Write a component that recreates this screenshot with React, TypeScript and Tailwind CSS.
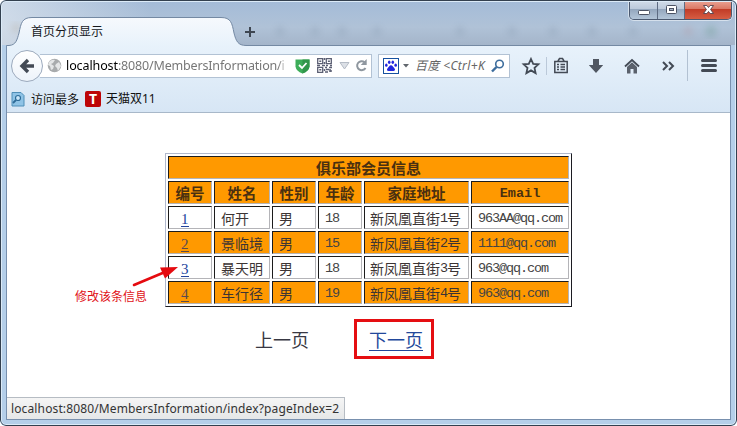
import type { ReactNode } from "react";

const members = [
  { id: "1", name: "何开", sex: "男", age: "18", no: "1", email: "963AA@qq.com" },
  { id: "2", name: "景临境", sex: "男", age: "15", no: "2", email: "1111@qq.com" },
  { id: "3", name: "暴天明", sex: "男", age: "18", no: "3", email: "963@qq.com" },
  { id: "4", name: "车行径", sex: "男", age: "19", no: "4", email: "963@qq.com" },
];

const UI = "font-['Noto_Sans','Noto_Sans_CJK_SC',sans-serif]";
const CJK = "font-['Noto_Sans_CJK_SC',sans-serif]";
const MONO = "font-['Liberation_Mono','Noto_Sans_CJK_SC',monospace] text-[13.5px] tracking-[-1.1px]";

function Cell({ orange, className = "", children }: { orange: boolean; className?: string; children: ReactNode }) {
  return (
    <div
      className={`flex h-[23px] items-center overflow-hidden whitespace-nowrap border border-b-[#b4b4b8] border-l-[#1c1c1c] border-r-[#b4b4b8] border-t-[#1c1c1c] ${orange ? "bg-[#ff9900]" : "bg-white"} ${className}`}
    >
      {children}
    </div>
  );
}

function MemberTable() {
  return (
    <div className="grid w-[407px] grid-cols-[44px_56px_44px_44px_105px_98px] gap-[2px] border border-b-[#1c1c22] border-l-[#b0b8cc] border-r-[#1c1c22] border-t-[#b0b8cc] p-[2px] text-[14px] leading-[20px] text-[#3c3434]">
      <Cell orange className="col-span-6 justify-center text-[15px] font-bold text-[#4a3010]">
        <span>俱乐部会员信息</span>
      </Cell>
      {["编号", "姓名", "性别", "年龄", "家庭地址"].map((t) => (
        <Cell key={t} orange className="justify-center text-[14.5px] font-bold text-[#4a3010]">
          <span>{t}</span>
        </Cell>
      ))}
      <Cell orange className="justify-center pt-[3px] font-['Liberation_Mono',monospace] text-[13.5px] font-bold text-[#4a3010]">
        Email
      </Cell>
      {members.map((m, i) => {
        const o = i % 2 === 1;
        return [
          <Cell key={m.id + "a"} orange={o} className="pl-[12px]">
            <span
              className={`mt-[3px] h-[16px] border-b font-['Liberation_Serif',serif] text-[15px] leading-[17px] ${o ? "border-[#5a4a50] text-[#5a4a50]" : "border-[#23449c] text-[#23449c]"}`}
            >
              {m.id}
            </span>
          </Cell>,
          <Cell key={m.id + "b"} orange={o} className="pl-[6px]">{m.name}</Cell>,
          <Cell key={m.id + "c"} orange={o} className="pl-[6px]">{m.sex}</Cell>,
          <Cell key={m.id + "d"} orange={o} className="pl-[6px]">
            <span className={`${MONO} mt-[3px] text-[#444]`}>{m.age}</span>
          </Cell>,
          <Cell key={m.id + "e"} orange={o} className="pl-[5px]">
            <span>新凤凰直街</span>
            <span className={`${MONO} mt-[3px]`}>{m.no}</span>
            <span>号</span>
          </Cell>,
          <Cell key={m.id + "f"} orange={o} className="pl-[6px]">
            <span className={`${MONO} mt-[3px] text-[#444]`}>{m.email}</span>
          </Cell>,
        ];
      })}
    </div>
  );
}

function WindowButtons() {
  return (
    <div className="absolute right-[5px] top-0 flex h-[20px] w-[103px] overflow-hidden rounded-b-[5px] border border-t-0 border-[#4b5970] shadow-[0_0_0_1px_#d5e0ec]">
      <div className="flex w-[28px] items-center justify-center border-r border-[#5d6b82] bg-[linear-gradient(#d4deea_0,#bccadb_45%,#94a7be_50%,#b3c5d8_100%)]">
        <svg width="14" height="14" viewBox="0 0 14 14"><rect x="1.5" y="7.5" width="11" height="4" rx="1" fill="#fff" stroke="#4b5263" /></svg>
      </div>
      <div className="flex w-[27px] items-center justify-center border-r border-[#5d6b82] bg-[linear-gradient(#d4deea_0,#bccadb_45%,#94a7be_50%,#b3c5d8_100%)]">
        <svg width="13" height="12" viewBox="0 0 13 12"><rect x="1.5" y="1.5" width="10" height="8" rx="1" fill="#fff" stroke="#4b5263" /><rect x="4.5" y="4.5" width="4" height="2" fill="#a8b5c6" stroke="#4b5263" /></svg>
      </div>
      <div className="flex flex-1 items-center justify-center bg-[linear-gradient(#eca89a_0,#db7966_45%,#c13c27_50%,#d65d43_100%)]">
        <svg width="13" height="13" viewBox="0 0 13 13"><path d="M1.500 2.500h3.400l1.600 2 1.600-2h3.400L8.600 6.500l2.900 4H8.100l-1.600-2-1.600 2H1.500l2.900-4z" fill="#fff" stroke="#54414c" strokeWidth="0.9" /></svg>
      </div>
    </div>
  );
}

function TabStrip() {
  return (
    <div className="relative h-[45px] bg-[linear-gradient(#a3bbd8,#b0c2d7_60%,#a4b5ca)]">
      <svg className="absolute left-0 top-0" width="737" height="46" viewBox="0 0 737 46">
        <defs>
          <linearGradient id="tab" x1="0" y1="17" x2="0" y2="46" gradientUnits="userSpaceOnUse">
            <stop offset="0" stopColor="#f6f9fd" /><stop offset="1" stopColor="#e8f2fb" />
          </linearGradient>
          <linearGradient id="glow"><stop stopColor="#dfe7f0" stopOpacity=".7" /><stop offset="1" stopColor="#dfe7f0" stopOpacity="0" /></linearGradient>
          <filter id="soft"><feGaussianBlur stdDeviation="3" /></filter>
        </defs>
        <rect width="150" height="45" fill="url(#glow)" />
        <g filter="url(#soft)" opacity=".14">
          <circle cx="16" cy="28" r="5" fill="#9c7b50" />
          {[280, 315, 342, 377, 460, 512, 553, 592, 633].map((x) => <circle key={x} cx={x} cy="31" r="5" fill="#60758a" />)}
          <circle cx="688" cy="31" r="5" fill="#b66" /><circle cx="711" cy="31" r="6" fill="#176f42" />
        </g>
        <path d="M6.500 46V45.500H9C16 45 17 40 19 33C21 23 22 17.500 32 17.500H221C231 17.500 232 23 234 33C236 41 238 45.500 246 45.500H731V46z" fill="url(#tab)" />
        <path d="M6.500 45.500H9C16 45 17 40 19 33C21 23 22 17.500 32 17.500H221C231 17.500 232 23 234 33C236 41 238 45.500 246 45.500H731" fill="none" stroke="#7489a3" />
        <path d="M245 32h10M250 27v10" stroke="#3e4651" strokeWidth="2" />
      </svg>
      <div className={`${CJK} relative pl-[31px] pt-[22px] text-[12px] leading-[18px] text-[#15181d]`}>首页分页显示</div>
      <WindowButtons />
    </div>
  );
}

function Toolbar() {
  return (
    <div className="flex h-[41px] items-center">
      <div className="z-10 ml-[4px] flex h-[32px] w-[32px] shrink-0 items-center justify-center rounded-full border border-[#9caabd] bg-[linear-gradient(#fff,#edf3fa)]">
        <svg width="16" height="16" viewBox="0 0 16 16" fill="none" stroke="#434a55" strokeWidth="3.400"><path d="M15 8H3M9 2L3 8l6 6" /></svg>
      </div>
      <div className={`-ml-[3px] flex h-[24px] w-[332px] shrink-0 items-center border border-l-0 border-[#b2c2d4] bg-white pl-[7px] ${UI}`}>
        <svg width="15" height="15" viewBox="0 0 15 15"><circle cx="7.500" cy="7.500" r="6.800" fill="#a8abad" /><path d="M2 4q3-3 6-2L6 5 4 6l3 2-1 3-2 1-1-4-2-1zM9 6l3-2 2 4-3 5-1-3-2-2z" fill="#e4e6e7" /></svg>
        <div className="ml-[4px] w-[220px] whitespace-nowrap text-[12.5px] leading-[20px] text-[#777] [mask-image:linear-gradient(to_right,#000_212px,transparent_222px)]">
          <span className="tracking-[-0.1px] text-black">localhost</span><span className="tracking-[-0.17px]">:8080/MembersInformation/i</span>
        </div>
        <svg className="ml-[9px]" width="15" height="16" viewBox="0 0 15 16"><path d="M.5 1.500h14v7Q14 13 7.500 15.500Q1 13 .5 8.500z" fill="#3dad59" /><path d="M7.500 1.500h7v7Q14 13 7.500 15.500z" fill="#32964b" /><path d="M4 7l3 3 4.500-5" fill="none" stroke="#fff" strokeWidth="1.800" /></svg>
        <svg className="ml-[7px]" width="15" height="15" viewBox="0 0 15 15" stroke="#5b5f73" fill="none"><path d="M.7.7h5v5h-5zM9.300.7h5v5h-5zM.7 9.300h5v5h-5z" strokeWidth="1.300" /><path d="M2.300 3.200h2M10.900 3.200h2M2.300 11.800h2M7.500 0v2M7.500 4v2M0 7.500h3M5 7.500h3M9 7.500h2M13 7.500h2M8 9.500h2M12 9.500h3M9 11.500h3M7.500 11v2M8 14h3M13 13h2M13 11v3" strokeWidth="1.600" /></svg>
        <svg className="ml-[7px]" width="11" height="10" viewBox="0 0 11 10"><path d="M1 1.500h9L5.500 8z" fill="#dce0e6" stroke="#b5bcc6" /></svg>
        <svg className="ml-[5px]" width="13" height="13" viewBox="0 0 13 13"><path d="M9.500 3.200A4.500 4.500 0 1 0 10.500 9" fill="none" stroke="#8f979f" strokeWidth="2" /><path d="M11.700 0v6H5.800z" fill="#8f979f" /></svg>
      </div>
      <div className={`ml-[6px] flex h-[24px] w-[132px] shrink-0 items-center border border-[#b2c2d4] bg-white pl-[4px] ${UI}`}>
        <svg width="16" height="16" viewBox="0 0 16 16"><rect x=".5" y=".5" width="15" height="15" fill="#fff" stroke="#1751a0" /><g fill="#2026df" transform="translate(1.200 1.200) scale(.85)"><ellipse cx="2.500" cy="7" rx="1.500" ry="1.900" /><ellipse cx="5.900" cy="3.600" rx="1.500" ry="2" /><ellipse cx="10.100" cy="3.600" rx="1.500" ry="2" /><ellipse cx="13.500" cy="7" rx="1.500" ry="1.900" /><path d="M8 7.200c2 0 2 1.800 4 3.400 1.500 1.300.5 3.700-1.500 3.400H5.500C3.500 14.300 2.500 12 4 10.600 6 9 6 7.200 8 7.200z" /></g></svg>
        <svg className="ml-[4px]" width="6" height="4" viewBox="0 0 6 4"><path d="M0 0h6L3 3.500z" fill="#61666d" /></svg>
        <span className="ml-[6px] w-[71px] whitespace-nowrap text-[12px] italic leading-[20px] tracking-[0.35px] text-[#666]">百度 &lt;Ctrl+K</span>
        <svg className="ml-[5px]" width="14" height="14" viewBox="0 0 14 14" fill="none" stroke="#3d6d9d"><circle cx="8.500" cy="5" r="3.800" strokeWidth="1.600" /><path d="M5.500 8L1 12.500" strokeWidth="2.400" /></svg>
      </div>
      <svg className="shrink-0" width="221" height="34" viewBox="510 49 221 34" fill="none" stroke="#434a55">
        <path d="M531 59l2.200 4.800 5.200.5-3.900 3.600 1.100 5.200-4.600-2.700-4.600 2.700 1.100-5.200-3.900-3.600 5.200-.5z" strokeWidth="1.800" />
        <path d="M546.500 57v18" stroke="#bbc9d9" />
        <path d="M554.800 61.500h12.400v11h-12.400zM558 61l1.500-2.500h3L564 61M557 64.500h2M560.500 64.500h4.500M557 67h2M560.500 67h4.500M557 69.500h2M560.500 69.500h4.500" strokeWidth="1.500" />
        <path d="M593 59h6v6h4.200L596 73l-7.200-8h4.200z" fill="#505762" stroke="none" />
        <path d="M625 66.500l7-6.500 7 6.500" strokeWidth="1.800" /><path d="M627 67l5-4.700 5 4.700v6.500h-3.500v-4.500h-3v4.500H627z" fill="#5a616c" stroke="none" />
        <path d="M663 62l4 4-4 4M669 62l4 4-4 4" strokeWidth="2" />
        <path d="M687.500 50v31" stroke="#b2c1d2" />
        <path d="M702.500 60.500h13M702.500 65.500h13M702.500 70.500h13" strokeWidth="3" strokeLinecap="round" />
      </svg>
    </div>
  );
}

function Bookmarks() {
  return (
    <div className={`flex h-[26px] items-center pl-[4px] text-[12px] leading-[18px] text-[#111] ${CJK}`}>
      <svg width="14" height="15" viewBox="0 0 14 15"><path d="M1 .5h9l3 3v10.500H1z" fill="#8fc3e6" stroke="#4f8eb7" /><circle cx="7" cy="6" r="2.500" fill="#c9e7fb" stroke="#2e6c98" strokeWidth="1.200" /><path d="M5 8l-3 3" stroke="#2e6c98" strokeWidth="1.800" /></svg>
      <span className="ml-[6px] w-[48px] whitespace-nowrap">访问最多</span>
      <span className="ml-[6px] flex h-[16px] w-[16px] items-center justify-center rounded-[2px] bg-[#bd0508] font-['Noto_Sans',sans-serif] text-[14px] font-bold leading-[16px] text-white">T</span>
      <span className={`ml-[5px] ${UI}`}>天猫双11</span>
    </div>
  );
}

export default function App() {
  return (
    <div className="relative h-[426px] w-[737px] overflow-hidden rounded-[6px] bg-[#b5cfe9]">
      <TabStrip />
      <div className="mx-[6px] h-[375px] border-x border-b border-[#7890ae] bg-white">
        <div className="h-[68px] border-b border-[#a8b8c9] bg-[linear-gradient(#e8f2fb,#d7e6f5)]">
          <Toolbar />
          <Bookmarks />
        </div>
        <div className={`relative flex h-[306px] flex-col pl-[158px] pt-[40px] ${CJK}`}>
          <MemberTable />
          <div className="mt-[12px] flex h-[40px] items-center text-[18px] leading-[24px] text-[#383843]">
            <span className="ml-[90px] w-[54px] whitespace-nowrap">上一页</span>
            <div className="ml-[45px] flex h-[40px] w-[80px] items-center border-[3px] border-[#e50e12] pl-[12px]">
              <span className="h-[24px] whitespace-nowrap border-b border-[#22489b] text-[#22489b]">下一页</span>
            </div>
          </div>
          <span className="absolute left-[68px] top-[174px] whitespace-nowrap text-[12px] leading-[18px] text-[#df1117]">修改该条信息</span>
          <svg className="absolute left-[123px] top-[149px]" width="50" height="28" viewBox="130 262 50 28"><path d="M134 285L165 272" stroke="#e50b10" strokeWidth="2.600" strokeLinecap="round" /><path d="M178 267L160 267.500 165 278.500z" fill="#e50b10" /></svg>
          <div className={`absolute bottom-0 left-0 h-[22px] w-[338px] whitespace-nowrap border-r border-t border-[#b6bcc3] bg-[linear-gradient(#f5f5f5,#e5e7e8)] pl-[4px] text-[12px] leading-[21px] text-[#333] ${UI}`}>
            <span className="tracking-[0.13px]">localhost:8080/MembersInformation/index?pageIndex=2</span>
          </div>
        </div>
      </div>
      <div className="pointer-events-none absolute inset-0 rounded-[6px] border border-[#33404f] shadow-[inset_0_0_0_1px_#dcebf8]" />
    </div>
  );
}
